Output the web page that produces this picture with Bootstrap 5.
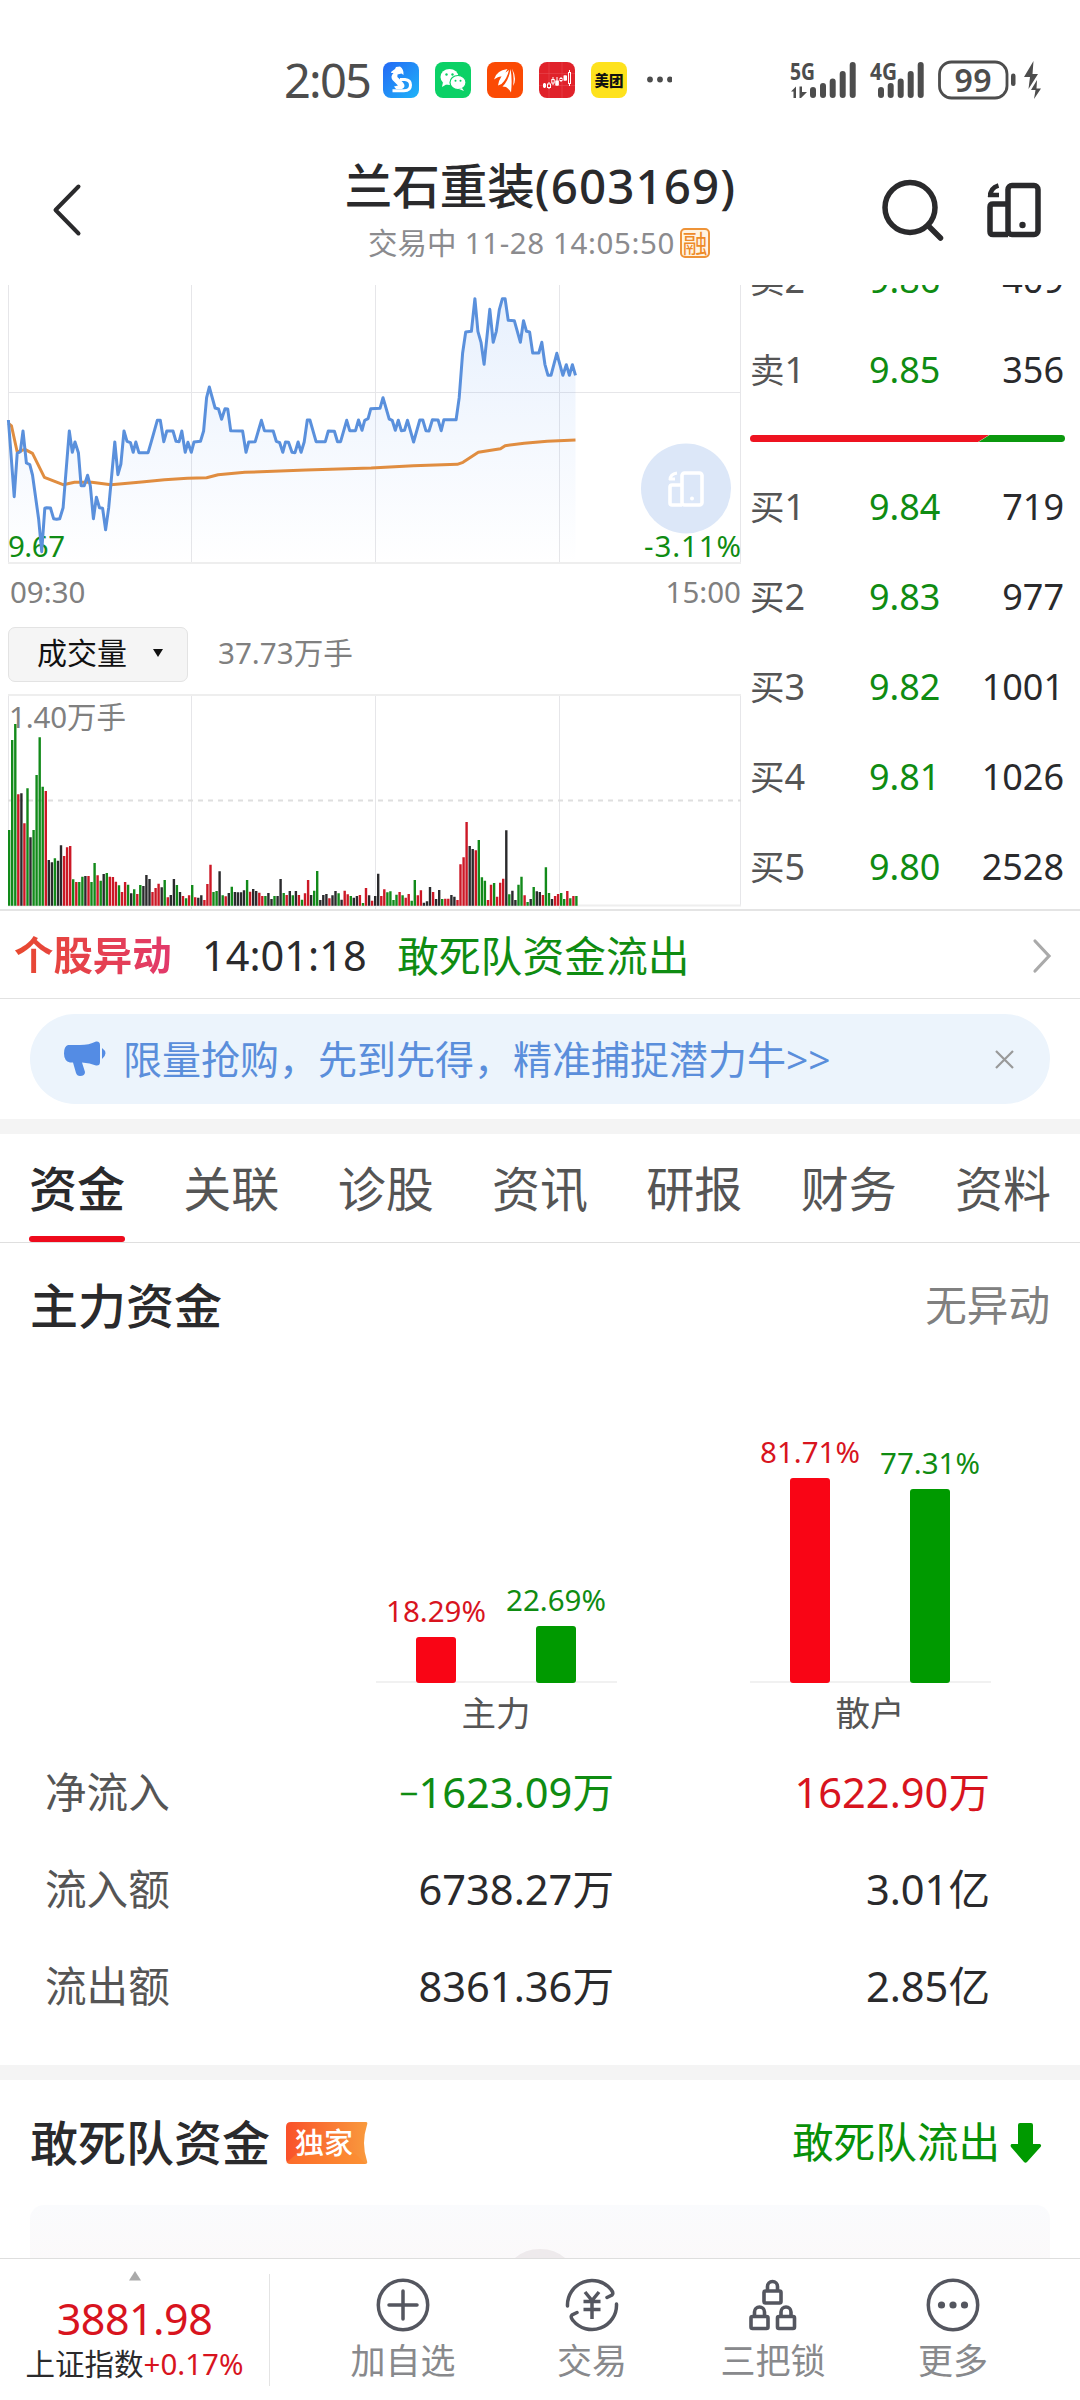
<!DOCTYPE html>
<html lang="zh-CN">
<head>
<meta charset="utf-8">
<title>兰石重装(603169)</title>
<meta name="viewport" content="width=device-width, initial-scale=1">
<link href="https://cdn.jsdelivr.net/npm/bootstrap@5.3.0/dist/css/bootstrap.min.css" rel="stylesheet">
<style>
body{font-family:"Noto Sans","Noto Sans CJK SC",sans-serif;color:#2a2a2c;background:#fff;line-height:1}
svg{display:block;flex:none}
.screen{width:1080px;height:2400px}
.up{color:#d8141e}.down{color:#0f8c12}
.ink5{color:#555}.ink8{color:#808080}
.statusbar{height:140px;padding:62px 0 42px 284px;color:#4d4d4d}
.clock{font-size:47px;letter-spacing:-1.8px;line-height:36px;width:99px}
.appicon{margin-right:16px}
.titlebar{height:145px;padding:0 39px 0 52px}
.stock-name{font-size:47.500px;line-height:56px;font-weight:500;padding-left:3px}
.stock-name span{letter-spacing:1.1px}
.stock-time{font-size:29.500px;line-height:36px;color:#8b8b8e}
.stock-time .cj{letter-spacing:0}
.rong{width:30px;height:30px;border:2px solid #ee9338;border-radius:5px;color:#ee8a28;background:#fff4e2;font-size:25px;line-height:26px;margin-left:5px}
.quotes{height:626px;border-bottom:2px solid #e4e4e4}
.charts{width:750px}
.axis{height:61px;font-size:29.500px;padding:1px 9px 0 10px}
.volbar{height:56px;padding-left:8px;font-size:30px}
.picker{width:180px;height:55px;border:1.5px solid #e3e3e3;border-radius:7px;background:#f5f5f5;color:#111;padding:0 0 3px 28px}
.book{width:330px;padding:0 16px 0 0;margin-top:-50px;font-size:36px}
.clipper{height:624px}
.book-row{height:90px}
.book-row .side{width:119px;font-size:36px}
.book-row .side b{font-weight:400;font-size:34.5px}
.ratio{height:47px;padding:19px 0 0;width:315px}
.alertrow{height:88px;border-bottom:1px solid #e2e2e2;padding:3px 28px 0 14px}
.alert-tag{font-size:39.4px;font-weight:700;background:linear-gradient(90deg,#e8492f,#e2396c);-webkit-background-clip:text;background-clip:text;color:transparent;width:158px;line-height:1.2}
.promo{margin:15px 30px;height:90px;border-radius:45px;background:#ecf4fc;color:#5a8edb;padding:0 35px 0 34px;font-size:39px}
.band{height:15px;background:#f4f4f4}
.tabs{height:109px;border-bottom:1px solid #dfdfdf;padding:0 29px;font-size:48px;color:#555}
.tabs a{color:inherit;text-decoration:none;line-height:109px;height:108px}
.tabs a.on{color:#2a2a2c;font-weight:500;position:relative}
.tabs a.on::after{content:"";position:absolute;left:0;right:0;bottom:0;height:6px;border-radius:3px;background:#ee0a1c}
.sec{font-size:48px;font-weight:500}
.note{font-size:41.6px}
.plot{height:282px;padding-left:376px;gap:134px}
.pair{width:241px;margin-right:-1px;background:linear-gradient(#f1f1f1,#f1f1f1) bottom/100% 2px no-repeat}
.pair>div{width:120px;font-size:29.500px}
.pair i{display:block;width:40px;border-radius:3px;margin-top:12px}
.i-up{background:#f90515}.i-down{background:#009a00}
.names{font-size:34.5px;padding-left:376px;gap:134px;height:61px}
.names div{width:240px}
.flow-row{height:97px;padding:0 90px 0 45px;font-size:41.6px}
.flow-row .nm{width:190px}
.flow-row .v1{width:379px}
.minus{font-size:34px;vertical-align:2px}
.lower{height:178px}
.teaser{margin:0 30px;height:53px;border-radius:14px 14px 0 0;background:linear-gradient(#fafbfd,#fbf9fa)}
.foot{height:142px;border-top:1px solid #dedede}
.idx{width:269px}
.fitem{font-size:35px;color:#88898c}
.fitem span{margin-top:11px}
</style>
</head>
<body>
<div class="screen mx-0 d-flex flex-column overflow-hidden">

<header class="statusbar d-flex align-items-center">
  <span class="clock">2:05</span>
  <svg class="appicon" width="36" height="36" viewBox="0 0 36 36"><defs><linearGradient id="gb" x1="0" y1="0" x2="1" y2="1"><stop offset="0" stop-color="#2468f5"/><stop offset="1" stop-color="#1fb4f8"/></linearGradient></defs><rect width="36" height="36" rx="8" fill="url(#gb)"/><path d="M8.500 9.500L12 7L13 5L17 4.500Q21 7 20.500 13L18.500 11.500L14.500 12.500Q13.500 14.500 16 16.500L20 20.500Q23.500 24.500 19 27H13L11 24.500L15 23.500L9.500 18Q7 14.500 10.500 11L8 11z" fill="#fff"/><path d="M17 17.500H22Q27.500 18 27.500 23Q27.500 28.800 21 28.800H9.500" fill="none" stroke="#fff" stroke-width="3"/></svg>
  <svg class="appicon" width="36" height="36" viewBox="0 0 36 36"><rect width="36" height="36" rx="8" fill="#0bd166"/><ellipse cx="14.500" cy="15" rx="9" ry="8" fill="#fff"/><path d="M8 20L7 25L12 22z" fill="#fff"/><ellipse cx="23" cy="20.500" rx="8" ry="7" fill="#fff" stroke="#0bd166" stroke-width="1.200"/><path d="M27 26L29 29L24 27z" fill="#fff"/><g fill="#0bd166"><circle cx="11.500" cy="12.500" r="1.200"/><circle cx="17.500" cy="12.500" r="1.200"/><circle cx="20.500" cy="18.800" r="1"/><circle cx="25.500" cy="18.800" r="1"/></g></svg>
  <svg class="appicon" width="36" height="36" viewBox="0 0 36 36"><rect width="36" height="36" rx="8" fill="#fb4a04"/><path d="M20.500 7Q9 8.500 7 17.500Q12 14 14.500 14.500Q19 11 20.500 7zM22 8Q12 14 11 23.500L14.500 22Q20 17 22 8zM23.500 7Q22 18 15.500 24.500L19 25Q22 27 24 30.500Q25.500 17 23.500 7zM25 6.500Q27.500 15 26 24Q30.500 17 25 6.500z" fill="#fff"/></svg>
  <svg class="appicon" width="36" height="36" viewBox="0 0 36 36"><rect width="36" height="36" rx="8" fill="#e0222a"/><path d="M0 11.500H36M0 23.500H36M10 0V36M23 0V36" stroke="#e84a50" stroke-width=".6"/><g stroke="#fff" stroke-width="1" fill="#fff"><path d="M5.500 21V26M10 20V27M14 15V23M18 15V24M22 15V20M26 13V19M30.500 8V24"/><rect x="4.500" y="22" width="2" height="3"/><rect x="8.500" y="22" width="3" height="3.500" fill="#e0222a"/><rect x="12.800" y="17.500" width="2.400" height="3.500" fill="#e0222a"/><rect x="16.800" y="19" width="2.500" height="4"/><rect x="21" y="16.500" width="2" height="2" fill="#e0222a"/><rect x="25" y="14" width="2.500" height="4"/><rect x="29.500" y="10.500" width="2" height="11" fill="#e0222a"/></g></svg>
  <svg class="appicon me-0" width="36" height="36" viewBox="0 0 36 36"><rect width="36" height="36" rx="8" fill="#fee21d"/><text x="18" y="23.500" font-size="14.500" font-weight="900" text-anchor="middle" fill="#111" font-family="Noto Sans CJK SC">美团</text></svg>
  <svg width="26" height="36" viewBox="0 0 26 36" style="margin-left:19px" fill="#4d4d4d"><circle cx="4" cy="17.500" r="2.900"/><circle cx="14" cy="17.500" r="2.900"/><circle cx="24" cy="17.500" r="2.900"/></svg>
  <svg width="264" height="56" viewBox="784 51 264 56" style="margin-left:112px" fill="#4d4d4d">
    <g font-family="Noto Sans" font-weight="700" font-size="24"><text x="790" y="79" textLength="25" lengthAdjust="spacingAndGlyphs">5G</text><text x="870" y="79" textLength="27" lengthAdjust="spacingAndGlyphs">4G</text></g>
    <path d="M791 90.500L796 85.500V97H793.500V90.500zM799.500 85.500H802V91H807L801 97H799.500z"/>
    <g stroke="#4d4d4d" stroke-width="6" stroke-linecap="round"><path d="M813 89V94M823 85V94M832.700 80.500V94M842.700 73V94M852.700 64V94M881 89V94M890.700 85V94M900.700 80.500V94M910.700 73V94M920.700 64V94"/></g>
    <rect x="939.500" y="61" width="67.500" height="36" rx="12" fill="none" stroke="#4d4d4d" stroke-width="2.800"/>
    <text x="973" y="91" font-family="Noto Sans" font-weight="600" font-size="32" text-anchor="middle" textLength="37">99</text>
    <rect x="1011" y="72.500" width="4.500" height="12.500" rx="2.200"/>
    <path d="M1033.500 60L1024 76H1030L1028.500 88L1038 73H1032.500zM1037 79L1031 89H1035.500L1034 98L1041 87.500H1036.500z"/>
  </svg>
</header>

<nav class="titlebar d-flex justify-content-between">
  <svg width="32" height="54" viewBox="1 0 32 54" style="margin-top:43px"><path d="M27.500 3.500L4.500 27L27.500 50.500" fill="none" stroke="#2a2a2c" stroke-width="4" stroke-linecap="round" stroke-linejoin="round"/></svg>
  <div class="d-flex flex-column align-items-center" style="margin:18px 0 0 113px">
    <div class="stock-name text-nowrap">兰石重装<span>(603169)</span></div>
    <div class="stock-time d-flex align-items-center text-nowrap" style="margin-top:11px"><span style="letter-spacing:.6px"><span class="cj">交易中</span> 11-28 14:05:50</span><span class="rong d-flex justify-content-center">融</span></div>
  </div>
  <div class="d-flex" style="gap:42px;margin-top:39px">
    <svg width="64" height="64" viewBox="880 179 64 64" fill="none" stroke="#2a2a2c"><circle cx="909" cy="207.500" r="25" stroke-width="5.500"/><path d="M927 225.500L939.500 238" stroke-width="5.500" stroke-linecap="round"/></svg>
    <svg width="54" height="64" viewBox="987 179 54 64" fill="none" stroke="#2a2a2c" stroke-width="5.500"><rect x="1008" y="185.500" width="30" height="49" rx="4"/><path d="M1008 204H993Q990 204 990 207V231.500Q990 234.500 993 234.500H1008"/><path d="M990 197Q990 188 998.500 185.500M988 195H999" stroke-width="4.500"/><circle cx="1022.500" cy="225" r="3.200" fill="#2a2a2c" stroke="none"/></svg>
  </div>
</nav>

<section class="quotes d-flex">
  <div class="charts">
    <svg width="750" height="280" viewBox="0 285 750 280">
      <defs><linearGradient id="ga" x1="0" y1="0" x2="0" y2="1"><stop offset="0" stop-color="#4c8ef0" stop-opacity=".13"/><stop offset="1" stop-color="#4c8ef0" stop-opacity="0"/></linearGradient></defs>
      <path d="M8.500 285V563M191.500 285V563M375.500 285V563M559.500 285V563M740.500 285V563M8 392.500H741" stroke="#e6e6e9" fill="none"/><path d="M8 563H741" stroke="#eeeeee" stroke-width="2"/>
      <g font-family="Noto Sans" font-size="29.500" fill="#0f8c12"><text x="8" y="557" textLength="57">9.67</text></g>
      <path id="area" fill="url(#ga)"/>
      <path id="avg" fill="none" stroke="#e08d40" stroke-width="3" stroke-linejoin="round"/>
      <path id="price" fill="none" stroke="#5a90dc" stroke-width="3" stroke-linejoin="round"/>
      <circle cx="686" cy="488.500" r="45" fill="#dce7f8"/>
      <g fill="none" stroke="#fff" stroke-width="3.600"><rect x="682" y="473" width="20" height="32" rx="2.500"/><path d="M682 485H672Q670 485 670 487V503Q670 505 672 505H682"/><path d="M670 480Q670 474 677 473M669 479H675" stroke-width="3"/><circle cx="692" cy="498.500" r="2" fill="#fff" stroke="none"/></g>
      <text x="644" y="557" textLength="97" font-family="Noto Sans" font-size="29.500" fill="#0f8c12">-3.11%</text>
    </svg>
    <div class="axis ink8 d-flex justify-content-between"><span style="line-height:52px">09:30</span><span style="line-height:52px">15:00</span></div>
    <div class="volbar d-flex align-items-center">
      <div class="picker d-flex align-items-center">成交量<svg width="12" height="10" viewBox="0 0 12 10" style="margin-left:25px"><path d="M1 1H11L6 9z" fill="#111"/></svg></div>
      <span class="ink8" style="margin:0 0 3px 30px;font-size:29.600px">37.73万手</span>
    </div>
    <svg width="750" height="227" viewBox="0 682 750 227">
      <path d="M8.500 695V906M191.500 695V909M375.500 695V909M559.500 695V909M740.500 695V906" stroke="#e6e6e9"/><path d="M8 695H741M8 905.500H741" stroke="#eeeeee" stroke-width="2"/>
      <path d="M8 800.500H741" stroke="#dedede" stroke-width="2" stroke-dasharray="5 5"/>
      <text x="9" y="728" font-family="Noto Sans,Noto Sans CJK SC" font-size="29.500" fill="#808080" textLength="117">1.40万手</text>
      <path id="bg" stroke="#128a1a" stroke-width="2.400"/><path id="br" stroke="#cc1826" stroke-width="2.400"/><path id="bk" stroke="#2a2a2c" stroke-width="2.400"/>
    </svg>
  </div>
  <div class="clipper overflow-hidden">
  <div class="book">
    <div class="book-row d-flex align-items-center"><span class="side ink5"><b>卖</b>2</span><span class="down">9.86</span><span class="ms-auto">409</span></div>
    <div class="book-row d-flex align-items-center"><span class="side ink5"><b>卖</b>1</span><span class="down">9.85</span><span class="ms-auto">356</span></div>
    <div class="ratio"><svg width="315" height="7" viewBox="0 0 315 7"><path d="M3.500 0H239L228 7H3.500A3.500 3.500 0 0 1 3.500 0z" fill="#ee1320"/><path d="M239.500 0H311.500A3.500 3.500 0 0 1 311.500 7H228.500z" fill="#0b980e"/></svg></div>
    <div class="book-row d-flex align-items-center"><span class="side ink5"><b>买</b>1</span><span class="down">9.84</span><span class="ms-auto">719</span></div>
    <div class="book-row d-flex align-items-center"><span class="side ink5"><b>买</b>2</span><span class="down">9.83</span><span class="ms-auto">977</span></div>
    <div class="book-row d-flex align-items-center"><span class="side ink5"><b>买</b>3</span><span class="down">9.82</span><span class="ms-auto">1001</span></div>
    <div class="book-row d-flex align-items-center"><span class="side ink5"><b>买</b>4</span><span class="down">9.81</span><span class="ms-auto">1026</span></div>
    <div class="book-row d-flex align-items-center"><span class="side ink5"><b>买</b>5</span><span class="down">9.80</span><span class="ms-auto">2528</span></div>
  </div>
  </div>
</section>

<section class="alertrow d-flex align-items-center text-nowrap">
  <span class="alert-tag">个股异动</span>
  <span style="font-size:41.500px;margin-left:30px;width:195px">14:01:18</span>
  <span class="down" style="font-size:41.800px">敢死队资金流出</span>
  <svg class="ms-auto" width="20" height="36" viewBox="0 0 20 36"><path d="M3 3L17 18L3 33" fill="none" stroke="#aaa" stroke-width="3.200" stroke-linecap="round"/></svg>
</section>

<section class="promo d-flex align-items-center text-nowrap">
  <svg width="43" height="38" viewBox="64 1041 43 38" fill="#548ce4"><path d="M68 1046H80Q89 1046 96 1042.500Q100 1042 100 1046V1063Q100 1067 96 1066.500Q90 1064 82 1063.500L85 1073Q85 1077 80 1077Q77 1077 76 1074L73 1063.500H70Q64 1062 64 1054.500Q64 1047 68 1046zM102 1049Q109 1054 102 1060z"/></svg>
  <span style="margin:0 0 2px 16px">限量抢购，先到先得，精准捕捉潜力牛&gt;&gt;</span>
  <svg class="ms-auto" width="21" height="21" viewBox="0 0 21 21"><path d="M2 2L19 19M19 2L2 19" stroke="#999" stroke-width="2.200"/></svg>
</section>
<div class="band flex-shrink-0"></div>

<nav class="tabs d-flex justify-content-between flex-shrink-0">
  <a class="on" href="#">资金</a><a href="#">关联</a><a href="#">诊股</a><a href="#">资讯</a><a href="#">研报</a><a href="#">财务</a><a href="#">资料</a>
</nav>

<section class="flex-shrink-0">
  <div class="d-flex justify-content-between align-items-center" style="height:126px;padding:0 30px"><span class="sec">主力资金</span><span class="note ink8">无异动</span></div>
  <div class="plot d-flex" style="margin-top:32px">
    <div class="pair d-flex align-items-end">
      <div class="up d-flex flex-column align-items-center">18.29%<i class="i-up" style="height:46px"></i></div>
      <div class="down d-flex flex-column align-items-center">22.69%<i class="i-down" style="height:57px"></i></div>
    </div>
    <div class="pair d-flex align-items-end">
      <div class="up d-flex flex-column align-items-center">81.71%<i class="i-up" style="height:205px"></i></div>
      <div class="down d-flex flex-column align-items-center">77.31%<i class="i-down" style="height:194px"></i></div>
    </div>
  </div>
  <div class="names d-flex align-items-center ink5 text-center"><div>主力</div><div>散户</div></div>
  <div class="flow-row d-flex align-items-center"><span class="nm ink5">净流入</span><span class="v1 text-end down"><span class="minus">−</span>1623.09万</span><span class="ms-auto up">1622.90万</span></div>
  <div class="flow-row d-flex align-items-center"><span class="nm ink5">流入额</span><span class="v1 text-end">6738.27万</span><span class="ms-auto">3.01亿</span></div>
  <div class="flow-row d-flex align-items-center"><span class="nm ink5">流出额</span><span class="v1 text-end">8361.36万</span><span class="ms-auto">2.85亿</span></div>
</section>
<div class="band flex-shrink-0" style="margin-top:30px"></div>

<section class="lower flex-shrink-0">
  <div class="d-flex align-items-center" style="height:125px;padding:0 38px 0 30px">
    <span class="sec">敢死队资金</span>
    <svg width="82" height="44" viewBox="0 0 82 44" style="margin-left:16px"><defs><linearGradient id="gt"><stop offset="0" stop-color="#f9512a"/><stop offset="1" stop-color="#f99a3d"/></linearGradient></defs><path d="M5 1H80Q82 1 81 4Q75 22 81 40Q82 43 79 43H5Q0 43 0 38V6Q0 1 5 1z" fill="url(#gt)"/><path d="M0 42L14 30H66L80 43H4z" fill="#ff8a2b" opacity=".45"/><text x="38" y="32.500" font-size="29" font-weight="500" fill="#fff" text-anchor="middle" font-family="Noto Sans CJK SC">独家</text></svg>
    <span class="note ms-auto" style="color:#089009">敢死队流出</span>
    <svg width="32" height="42" viewBox="0 0 32 42" style="margin-left:10px"><path d="M8 3Q8 1 10 1H21Q23 1 23 3V22H30Q32 23 30.500 25L17 40Q15.500 41.500 14 40L1 25Q0 23 1.500 22H8z" fill="#009a00"/></svg>
  </div>
  <div class="teaser d-flex justify-content-center align-items-end"><svg width="50" height="9" viewBox="0 0 50 9"><path d="M0 9Q10 0 25 0T50 9z" fill="#eeeaec"/></svg></div>
</section>

<footer class="foot d-flex flex-shrink-0">
  <div class="idx d-flex flex-column align-items-center" style="padding-top:12px">
    <svg width="14" height="10" viewBox="0 0 14 10"><path d="M7 0L13 9.500H1z" fill="#aaa"/></svg>
    <div class="up" style="font-size:43px;line-height:50px;margin-top:13px;letter-spacing:-.5px">3881.98</div>
    <div class="text-nowrap" style="font-size:29.500px;line-height:40px">上证指数<span class="up">+0.17%</span></div>
  </div>
  <div style="width:1px;height:112px;margin-top:15px;background:#e4e4e4"></div>
  <div class="d-flex" style="padding:19px 0 0 43px">
    <div class="fitem d-flex flex-column align-items-center" style="width:180px"><svg width="54" height="54" viewBox="0 0 54 54" fill="none" stroke="#54565f" stroke-width="3.500"><circle cx="27" cy="27" r="24.700"/><path d="M13 27H41M27 13V41" stroke-linecap="round"/></svg><span>加自选</span></div>
    <div class="fitem d-flex flex-column align-items-center" style="width:198px"><svg width="54" height="54" viewBox="0 0 54 54" fill="none" stroke="#54565f" stroke-width="3.500"><path d="M2.500 28A24.500 24.500 0 0 1 46 11.500Q49 15 47 17L42 19.500M51.500 26A24.500 24.500 0 0 1 8 42.500Q5 39 7 37L12 34.500" stroke-linecap="round"/><path d="M20 14L27 22.500L34 14M18.500 23.500H35.500M18.500 31.500H35.500M27 23V41"/></svg><span>交易</span></div>
    <div class="fitem d-flex flex-column align-items-center" style="width:164px"><svg width="54" height="54" viewBox="0 0 54 54" fill="none" stroke="#54565f" stroke-width="3.600"><rect x="18" y="13" width="17" height="12" rx="1.500"/><path d="M21.500 13V8.500a5 5 0 0 1 10 0V13M8.500 38.500V34a5 5 0 0 1 10 0V38.500M35 38.500V34a5 5 0 0 1 10 0V38.500"/><rect x="5" y="38.500" width="17" height="12" rx="1.500"/><rect x="31.500" y="38.500" width="17" height="12" rx="1.500"/></svg><span>三把锁</span></div>
    <div class="fitem d-flex flex-column align-items-center" style="width:196px"><svg width="54" height="54" viewBox="0 0 54 54" fill="none" stroke="#54565f" stroke-width="3.500"><circle cx="27" cy="27" r="24.700"/><g fill="#54565f" stroke="none"><circle cx="15.500" cy="27" r="3.600"/><circle cx="27" cy="27" r="3.600"/><circle cx="38.500" cy="27" r="3.600"/></g></svg><span>更多</span></div>
  </div>
</footer>
</div>

<script src="https://cdn.jsdelivr.net/npm/bootstrap@5.3.0/dist/js/bootstrap.bundle.min.js"></script>
<script>
const KX = 600/1568, KY = 1/3;
const P = "22,420 37,650 45,520 53,515 60,453 69,549 78,554 85,585 101,716 109,815 117,685 122,683 132,684 140,716 148,718 156,716 165,683 181,453 189,517 196,486 205,518 212,617 220,617 229,586 236,617 244,716 252,652 260,683 268,685 276,749 284,683 300,486 308,584 316,552 324,453 332,484 341,488 348,517 355,486 363,518 387,518 395,487 411,421 419,421 428,485 436,453 452,453 460,484 468,485 475,453 484,517 491,487 500,517 507,486 524,484 532,453 540,353 547,321 562,384 571,387 579,418 588,386 595,387 603,452 634,453 643,517 650,486 667,485 675,453 683,421 691,452 714,453 722,484 731,488 739,517 746,486 754,487 763,517 771,518 779,486 787,517 795,486 803,420 810,420 826,485 850,485 858,453 874,454 882,485 890,485 906,421 914,452 929,452 937,420 946,451 953,421 962,416 969,386 993,385 1001,353 1017,417 1025,421 1033,451 1041,421 1049,452 1057,451 1065,421 1081,486 1097,420 1105,420 1113,452 1121,453 1130,419 1145,420 1153,452 1160,419 1192,419 1200,353 1209,220 1217,156 1232,154 1241,56 1249,154 1257,187 1265,253 1280,88 1289,187 1297,154 1305,88 1313,56 1320,56 1328,121 1344,122 1360,187 1368,122 1376,154 1384,156 1392,219 1408,219 1416,187 1424,253 1432,286 1440,286 1455,220 1471,286 1480,254 1488,286 1496,254 1504,286";
const A = "22,430 30,438 45,516 65,508 85,520 116,592 165,614 195,607 240,607 290,614 370,606 430,599 490,595 540,593 570,584 640,577 800,570 970,564 1080,557 1195,553 1210,547 1250,517 1308,506 1320,497 1370,490 1430,484 1504,480";
const line = s => "M" + s.split(" ").map(p => { const [x, y] = p.split(","); return (x*KX).toFixed(1) + " " + (280 + y*KY).toFixed(1); }).join("L");
document.getElementById("price").setAttribute("d", line(P));
document.getElementById("area").setAttribute("d", line(P) + "V563H8.400Z");
document.getElementById("avg").setAttribute("d", line(A));
const V = "g660 g390 g342 r553 k550 r640 g535 k682 g660 g495 g382 g530 r543 k750 k757 g745 k752 k706 r738 r712 r708 g808 r816 g816 g800 k798 r798 g816 g759 r796 g812 k792 g789 r800 r801 r815 g826 r846 r816 g824 k850 g838 r852 g825 k828 k795 k807 r846 r834 r821 k832 g810 r862 k855 k807 g825 k846 r858 g865 r856 g825 r862 k863 k856 r870 r822 r764 g846 g843 k784 g856 r859 k849 g830 k846 k847 k847 k841 g810 r845 k837 k843 r848 r858 g858 k849 k867 g858 k858 k807 g849 r855 k843 g856 k843 r855 g869 r850 r810 k855 g842 g783 k870 k855 k852 r865 k856 k843 g850 k869 r842 r853 g858 k863 k858 r855 g879 r834 k856 r872 k858 k791 r858 r838 g847 g844 g870 g854 r846 g856 r863 r852 g872 g810 r856 r841 k878 k874 k831 r846 k867 k840 g867 r866 r866 k855 k860 r870 r763 r742 r636 k708 k717 r721 g690 g802 g812 r870 r824 g819 r860 r818 r806 k661 g853 k842 k870 g824 g800 r856 g876 k867 g831 k844 k846 r855 g772 g849 k867 r858 r852 g849 g867 r843 g865 r858 g858".split(" ");
const d = {g: "", r: "", k: ""};
V.forEach((v, i) => { d[v[0]] += `M${((24 + 7.97*i)*KX).toFixed(1)} 905.700V${(610 + v.slice(1)*KY).toFixed(1)}`; });
for (const c in d) document.getElementById("b" + c).setAttribute("d", d[c]);
</script>
</body>
</html>
